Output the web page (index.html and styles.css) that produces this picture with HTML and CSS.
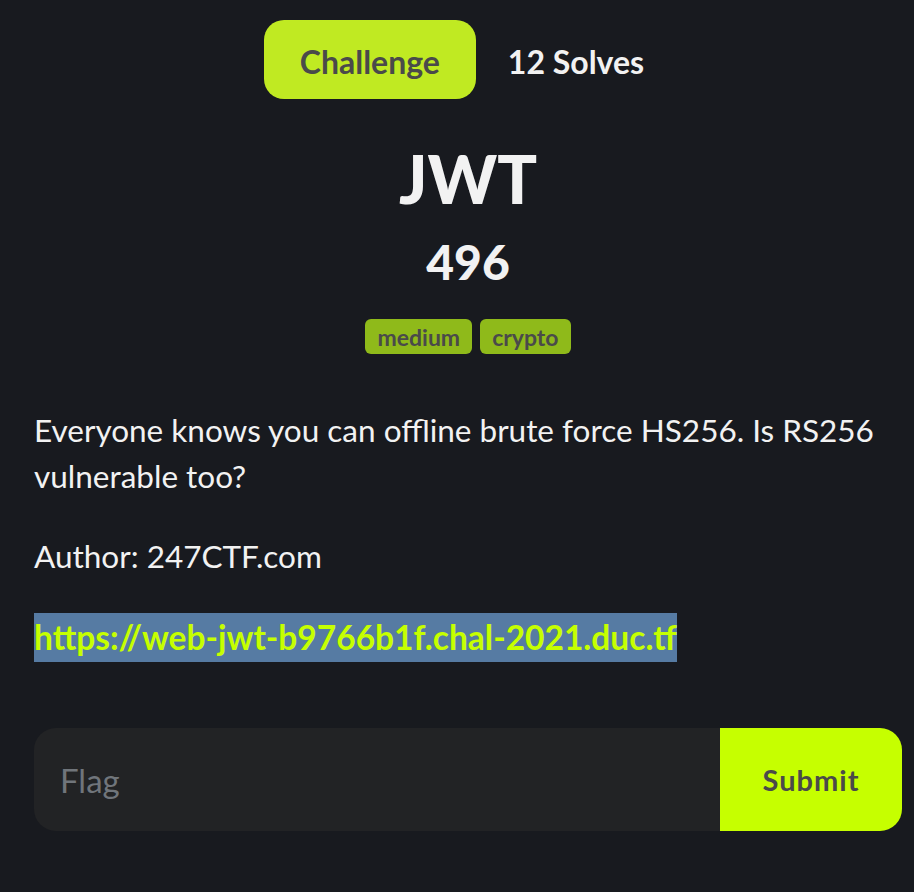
FILE: index.html
```html
<!DOCTYPE html>
<html lang="en">
<head>
<meta charset="utf-8">
<title>JWT</title>
<link rel="stylesheet" href="styles.css">
</head>
<body>
<main class="modal">
  <nav class="tabs">
    <span class="tab tab-active">Challenge</span>
    <span class="tab">12 Solves</span>
  </nav>
  <h1 class="title">JWT</h1>
  <h2 class="value">496</h2>
  <div class="tags">
    <span class="tag">medium</span>
    <span class="tag">crypto</span>
  </div>
  <div class="desc">
    <p>Everyone knows you can offline brute force HS256. Is RS256 vulnerable too?</p>
    <p>Author: 247CTF.com</p>
    <p class="link-row"><a class="link" href="#">https://web-jwt-b9766b1f.chal-2021.duc.tf</a></p>
  </div>
  <form class="flag-form">
    <input class="flag-input" type="text" placeholder="Flag">
    <button class="submit" type="button">Submit</button>
  </form>
</main>
</body>
</html>
```
FILE: styles.css
```css
html, body {
  margin: 0;
  padding: 0;
  background: #181a1f;
}
body {
  width: 914px;
  height: 892px;
  overflow: hidden;
  font-family: Lato, "Liberation Sans", sans-serif;
  color: #f2f2f2;
}
.modal {
  padding: 20px 12px 0 34px;
  display: flex;
  flex-direction: column;
}
.tabs {
  display: flex;
  justify-content: center;
  align-items: center;
  padding-left: 4px;
}
.tab {
  display: flex;
  align-items: center;
  justify-content: center;
  box-sizing: border-box;
  height: 79px;
  padding: 4px 32px 0;
  font-size: 32px;
  font-weight: 700;
  color: #f2f2f2;
  border-radius: 20px;
}
.tab-active {
  width: 212px;
  padding: 4px 0 0;
  background: #c0ea22;
  color: #4a4a4a;
}
.title {
  margin: 47px 0 0;
  text-align: center;
  font-size: 66px;
  line-height: 66px;
  font-weight: 900;
  color: #f2f2f2;
}
.value {
  margin: 26px 0 0;
  text-align: center;
  font-size: 48px;
  line-height: 48px;
  font-weight: 900;
  color: #f2f2f2;
}
.tags {
  margin-top: 33px;
  display: flex;
  justify-content: center;
  gap: 8px;
}
.tag {
  height: 35px;
  display: flex;
  align-items: center;
  padding: 0 12px;
  border-radius: 6px;
  background: #8fba1a;
  color: #4a4a4a;
  font-size: 23px;
  font-weight: 700;
}
.desc {
  margin-top: 53px;
  font-size: 31.5px;
  line-height: 46px;
}
.desc p {
  margin: 0 0 34px;
}
.desc .link-row {
  margin: 0;
  line-height: 49px;
  height: 49px;
}
.link {
  display: inline-block;
  height: 49px;
  line-height: 49px;
  background: #567ba3;
  color: #c6ff00;
  text-decoration: none;
  font-size: 33.5px;
  font-weight: 700;
}
.flag-form {
  margin-top: 66px;
  display: flex;
  height: 103px;
  border-radius: 22px;
  overflow: hidden;
}
.flag-input {
  flex: 1;
  border: none;
  outline: none;
  background: #222325;
  padding: 0 26px;
  font-family: Lato, sans-serif;
  font-size: 33px;
  color: #f2f2f2;
}
.flag-input::placeholder {
  color: #70757b;
}
.submit {
  width: 182px;
  border: none;
  background: #c6ff00;
  color: #4a4a4a;
  font-family: Lato, sans-serif;
  font-size: 29px;
  font-weight: 700;
  letter-spacing: 1px;
}
```
